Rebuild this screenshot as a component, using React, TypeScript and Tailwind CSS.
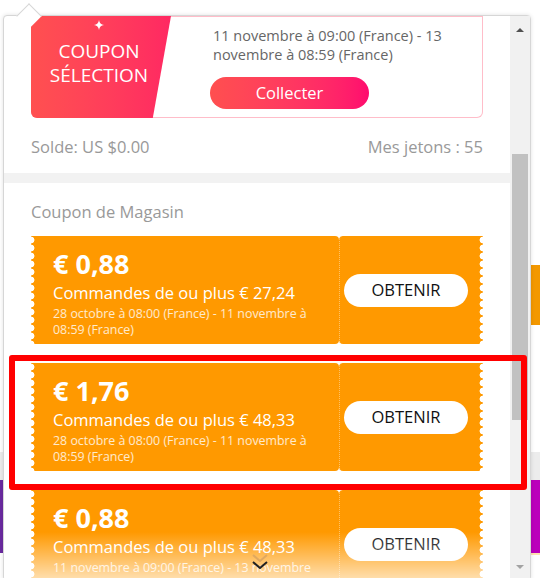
import React from "react";

/** Coupons de magasin affichés dans la liste */
const coupons = [
  {
    amount: "€ 0,88",
    min: "€ 27,24",
    date: "28 octobre à 08:00 (France) - 11 novembre à 08:59 (France)",
  },
  {
    amount: "€ 1,76",
    min: "€ 48,33",
    date: "28 octobre à 08:00 (France) - 11 novembre à 08:59 (France)",
  },
  {
    amount: "€ 0,88",
    min: "€ 48,33",
    date: "11 novembre à 09:00 (France) - 13 novembre à 08:59 (France)",
  },
];

// bord dentelé du ticket
const Scallop = ({ side }: { side: "left" | "right" }) => (
  <div
    className={
      side === "left"
        ? "absolute left-0 top-0 bottom-0 w-[4px] bg-[radial-gradient(circle_at_0_50%,#fff_3.2px,transparent_3.7px)] bg-size-[4px_8px]"
        : "absolute right-0 top-0 bottom-0 w-[4px] bg-[radial-gradient(circle_at_100%_50%,#fff_3.2px,transparent_3.7px)] bg-size-[4px_8px]"
    }
  />
);

const Sparkle = () => (
  <svg width="10" height="10" viewBox="0 0 10 10">
    <path d="M5 0 Q5.6 4.4 10 5 Q5.6 5.6 5 10 Q4.4 5.6 0 5 Q4.4 4.4 5 0Z" fill="#fff" />
  </svg>
);

const Chevron = ({ className }: { className: string }) => (
  <svg width="16" height="8" viewBox="0 0 16 8" className={className}>
    <polyline points="1,1 8,7 15,1" fill="none" stroke="currentColor" strokeWidth="2" />
  </svg>
);

const StoreCoupon = ({ amount, min, date }: { amount: string; min: string; date: string }) => (
  <div className="flex h-[108px] shrink-0">
    <div className="relative w-[308px] rounded-r-[4px] bg-[#ff9900] pl-[22px] pr-[18px] pt-[12px] text-white">
      <Scallop side="left" />
      <div className="text-[27px] font-bold leading-[32px]">{amount}</div>
      <div className="mt-[2px] text-[16.5px] leading-[22px]">Commandes de ou plus {min}</div>
      <div className="mt-[2px] text-[12.4px] leading-4 text-white/80">{date}</div>
    </div>
    <div className="relative flex flex-1 items-center rounded-l-[4px] border-l border-dotted border-white/40 bg-[#ff9900] pl-[4px]">
      <button className="h-[33px] w-[124px] rounded-full bg-white text-[16.5px] font-medium text-[#111]">
        OBTENIR
      </button>
      <Scallop side="right" />
    </div>
  </div>
);

export default function App() {
  return (
    <div className="relative flex h-[578px] w-[540px] justify-between overflow-hidden bg-white font-['Open_Sans',sans-serif]">
      {/* page derrière la fenêtre */}
      <div className="flex w-[3px] flex-col">
        <div className="mt-[452px] h-[28px] bg-[#ececec]" />
        <div className="h-[73px] bg-[#6a2aa0]" />
      </div>
      <div className="flex w-[9px] flex-col">
        <div className="mt-[265px] h-[60px] bg-[#f39800]" />
        <div className="mt-[127px] h-[28px] bg-[#ececec]" />
        <div className="h-[73px] bg-[#bb00bb]" />
        <div className="h-[2px] bg-[#ffe2b0]" />
      </div>

      {/* fenêtre des coupons */}
      <div className="absolute left-[3px] top-[15px] flex h-[566px] w-[528px] rounded-[4px] border border-[#d6d6d6] bg-white shadow-[0_0_4px_rgba(0,0,0,0.12)]">
        <div className="absolute -top-[9px] left-[16px] z-10 h-[18px] w-[18px] rotate-45 border-l border-t border-[#d6d6d6] bg-white" />

        <div className="relative w-[506px] overflow-hidden">
          <div className="px-[27px]">
            <div className="flex h-[102px] overflow-hidden rounded-b-[6px] bg-white shadow-[inset_0_0_0_1px_#ffbdc9]">
              <div className="flex w-[140px] flex-col items-center bg-linear-to-r from-[#ff5050] to-[#ff2862] pr-[4px] pt-[4px] text-white [clip-path:polygon(0_0,100%_0,87%_100%,0_100%)]">
                <Sparkle />
                <div className="mt-[9px] text-center text-[19px] leading-6">
                  COUPON
                  <br />
                  SÉLECTION
                </div>
              </div>
              <div className="flex flex-1 flex-col pl-[42px] pr-[12px] pt-[10px]">
                <div className="text-[14.5px] leading-[19px] text-[#666]">
                  11 novembre à 09:00 (France) - 13 novembre à 08:59 (France)
                </div>
                <button className="-ml-[3px] mt-[13px] h-[32px] w-[159px] rounded-full bg-linear-to-r from-[#ff4f4f] to-[#ff0a6e] text-[16.5px] text-white">
                  Collecter
                </button>
              </div>
            </div>
            <div className="mb-[15px] mt-[18px] flex justify-between text-[16.5px] leading-[22px] text-[#999]">
              <span>Solde: US $0.00</span>
              <span>Mes jetons : 55</span>
            </div>
          </div>

          <div className="h-[10px] bg-[#f2f2f2]" />

          <div className="flex flex-col px-[27px]">
            <div className="mb-[13px] mt-[18px] text-[16.5px] leading-[22px] text-[#999]">Coupon de Magasin</div>
            <div className="flex flex-col gap-[19px]">
              {coupons.map((c, i) => (
                <StoreCoupon key={i} {...c} />
              ))}
            </div>
          </div>

          {/* dégradé de fin de liste */}
          <div className="absolute bottom-0 left-0 right-0 flex h-[48px] flex-col items-center bg-linear-to-b from-white/0 to-white/70 pt-[22px]">
            <Chevron className="ml-[6px] text-[#e0a860]" />
            <Chevron className="-mt-[1px] ml-[6px] text-[#222]" />
          </div>
        </div>

        {/* barre de défilement */}
        <div className="flex w-[20px] flex-col bg-[#f1f1f1]">
          <div className="flex h-[20px] items-end justify-center pb-[4px]">
            <div className="h-0 w-0 border-x-[4px] border-b-[4px] border-x-transparent border-b-[#505050]" />
          </div>
          <div className="mx-[2px] mt-[118px] h-[266px] bg-[#c1c1c1]" />
          <div className="mt-[145px] flex justify-center">
            <div className="h-0 w-0 border-x-[4px] border-t-[4px] border-x-transparent border-t-[#a3a3a3]" />
          </div>
        </div>
      </div>

      {/* cadre de mise en évidence */}
      <div className="absolute left-[9px] top-[355px] h-[135px] w-[518px] rounded-[3px] border-[6px] border-[#ff0000]" />
    </div>
  );
}
